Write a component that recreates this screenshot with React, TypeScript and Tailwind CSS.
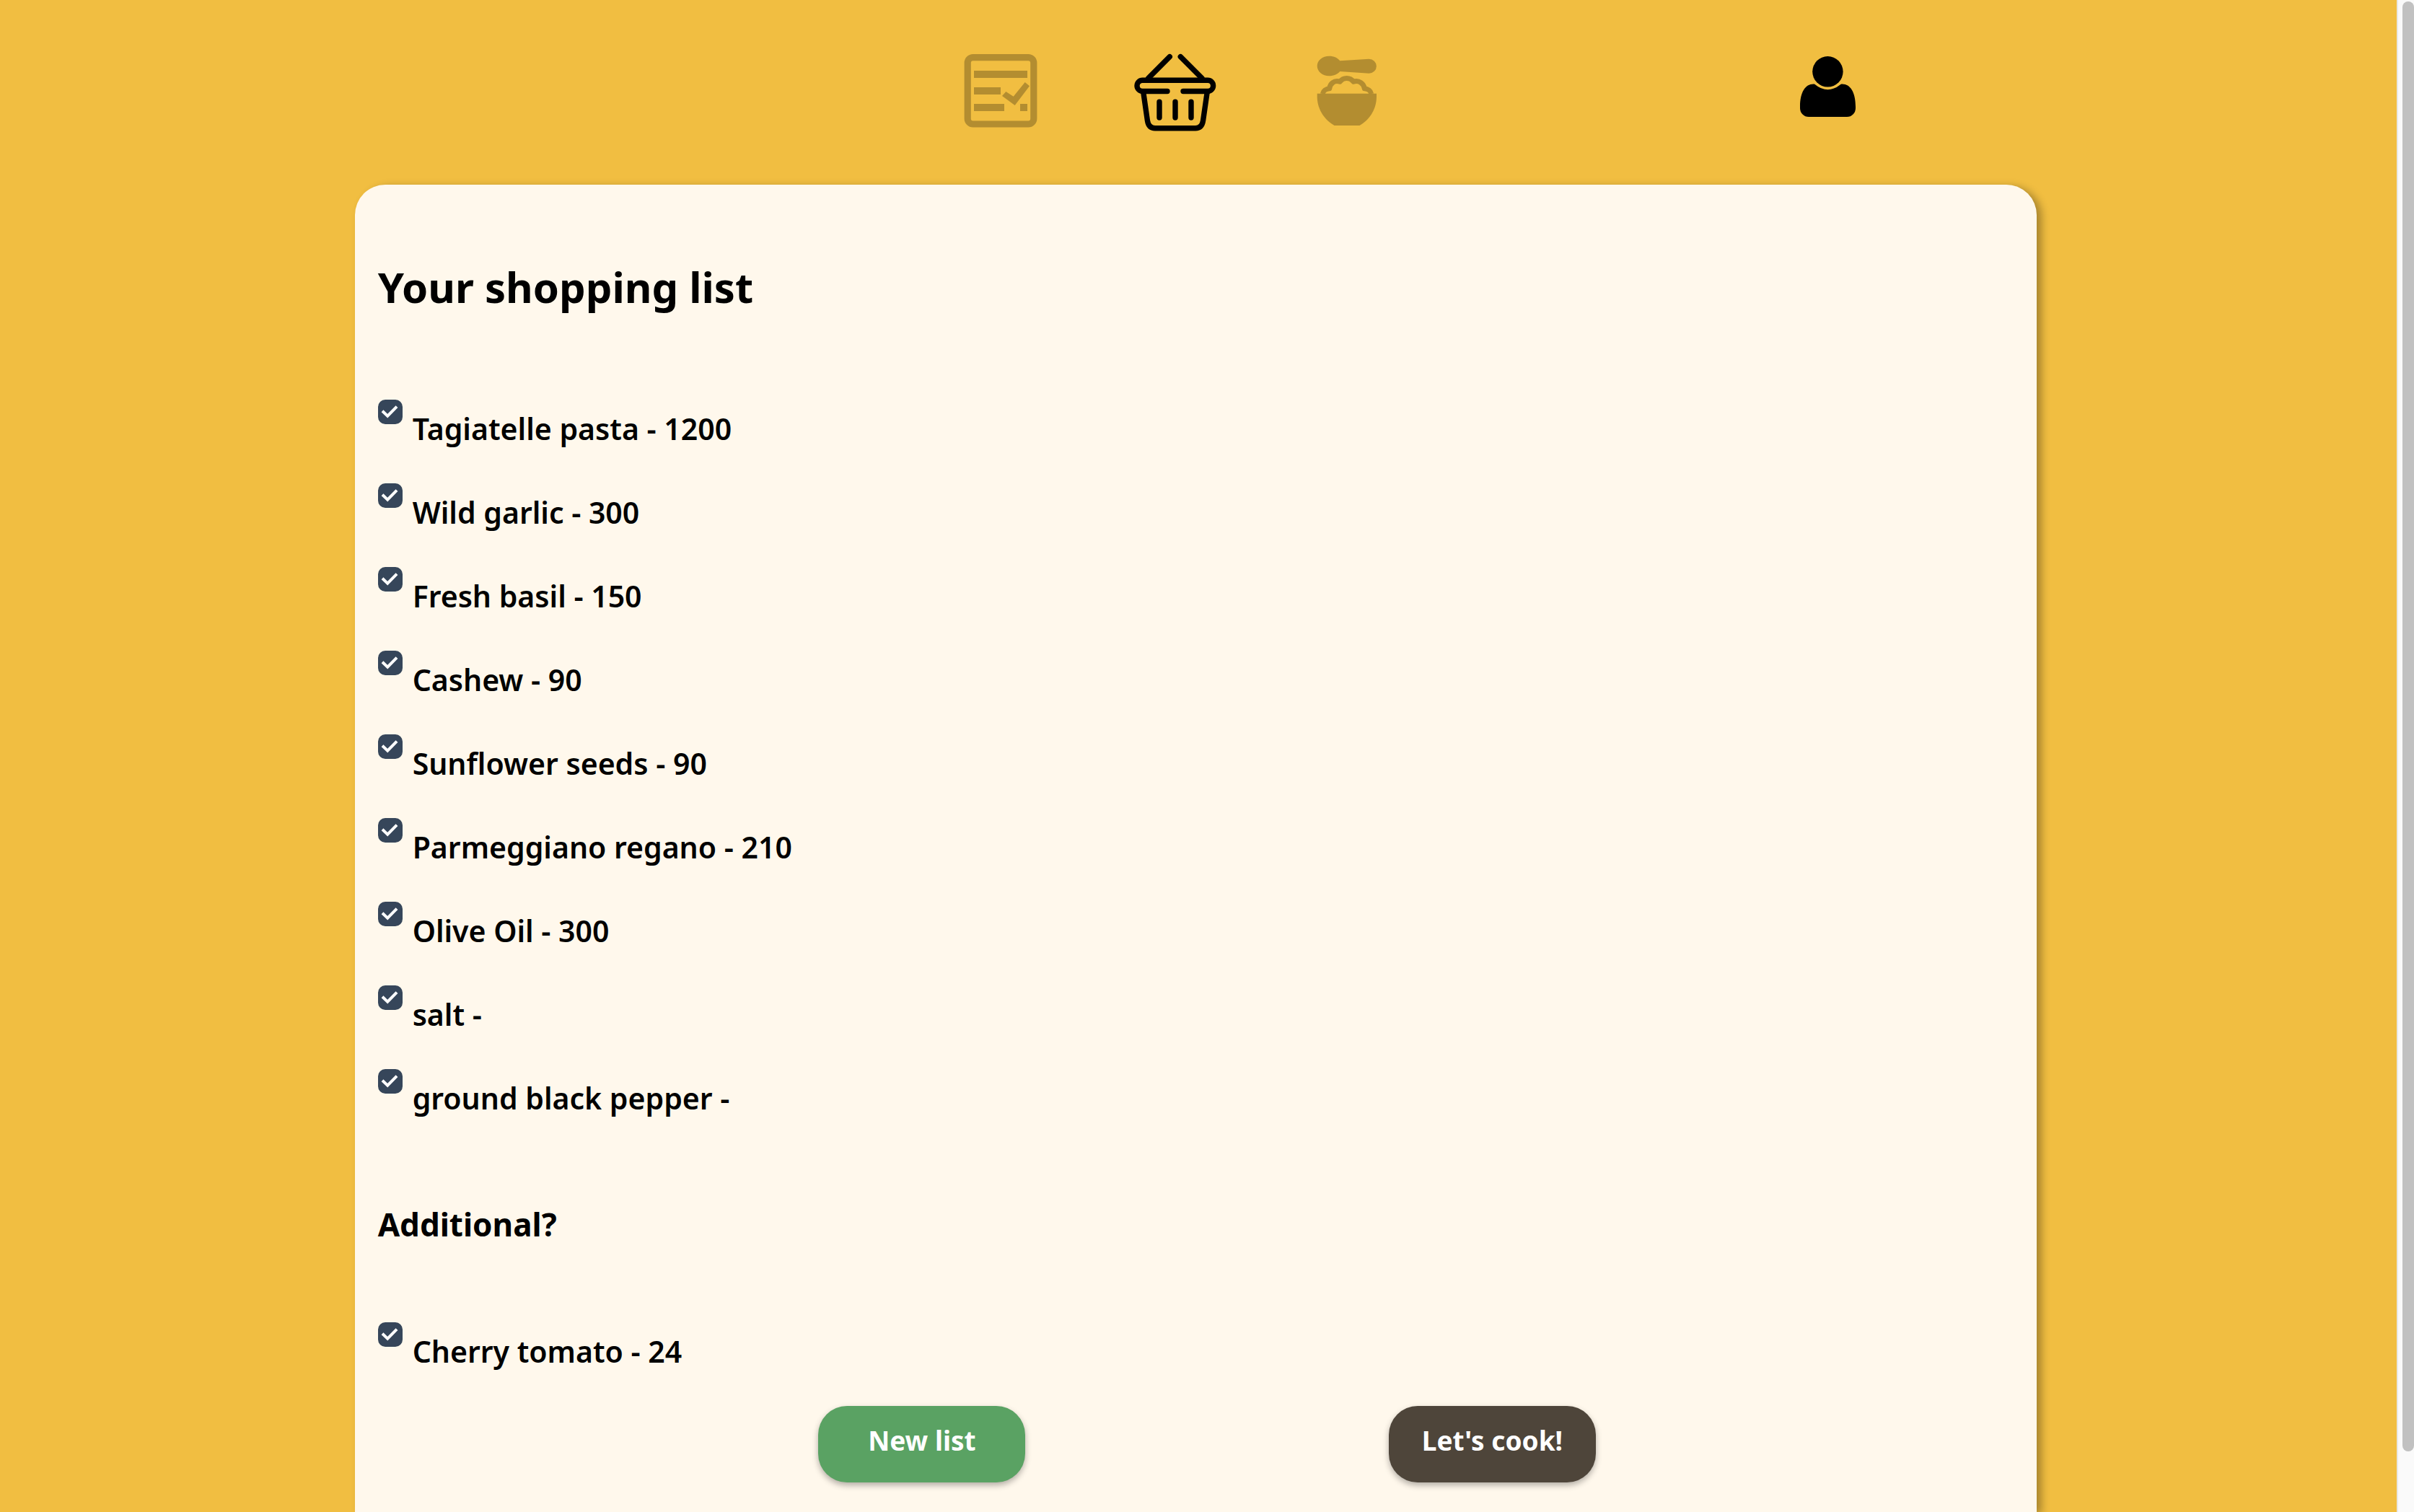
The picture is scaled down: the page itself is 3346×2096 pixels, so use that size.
import React from "react";

const shoppingList = [
  "Tagiatelle pasta - 1200",
  "Wild garlic - 300",
  "Fresh basil - 150",
  "Cashew - 90",
  "Sunflower seeds - 90",
  "Parmeggiano regano - 210",
  "Olive Oil - 300",
  "salt -",
  "ground black pepper -",
];

const additionalList = ["Cherry tomato - 24"];

function ChecklistIcon() {
  return (
    <svg viewBox="0 0 120 120" className="size-[120px]" fill="currentColor" aria-hidden="true">
      <rect x="14.2" y="9.6" width="91.6" height="92.4" rx="7.5" fill="none" stroke="currentColor" strokeWidth="9.2" />
      <rect x="23" y="28" width="74" height="10" />
      <rect x="23" y="51" width="37" height="10" />
      <rect x="23" y="74" width="42" height="10" />
      <rect x="87" y="74" width="10" height="10" />
      <path d="M62 63 67.3 57 77.7 63.7 93.7 44 100 49.3 79.7 76Z" />
    </svg>
  );
}

function BasketIcon() {
  return (
    <svg
      viewBox="0 0 120 120"
      className="size-[120px]"
      fill="none"
      stroke="currentColor"
      strokeWidth="7.4"
      strokeLinecap="round"
      strokeLinejoin="round"
      aria-hidden="true"
    >
      <path d="M54.3 8.7 24.7 38.3M69.3 8.7 99 38.3" />
      <path d="M51 56.5H16.7A7.7 7.7 0 0 1 9 48.8 7.6 7.6 0 0 1 16.7 41.3H107A7.6 7.6 0 0 1 114.6 48.8 7.7 7.7 0 0 1 107 56.5H73" />
      <path d="M17.8 58 23.4 97Q25 107.7 34 107.7H90Q99 107.7 100.6 97L106.2 58" />
      <path d="M40 71.2V93M62 71.2V93M84 71.2V93" />
    </svg>
  );
}

function BowlIcon() {
  return (
    <svg viewBox="0 0 120 120" className="size-[120px]" fill="currentColor" aria-hidden="true">
      <path d="M35.3 7.8C42 7.8 47.4 10.5 50.3 14.3L90.5 11.7A10.4 10 0 0 1 90.5 31.7L50.3 29C47.4 32.7 42 35.3 35.3 35.3 26.1 35.3 18.7 29.1 18.7 21.5S26.1 7.8 35.3 7.8Z" />
      <path
        d="M26.3 60C27 56 31 53 35.7 52.7 36.5 46.5 42 40.5 50.3 43.3A11.5 11.5 0 0 1 69 43.3C77 40.5 83.5 46.5 84.3 52.7 89 53 93 56 93.7 60"
        fill="none"
        stroke="currentColor"
        strokeWidth="7"
        strokeLinejoin="round"
      />
      <path d="M18.7 59.7H101V65C100.5 83 90 97 77.5 104H42.5C30 97 19.2 83 18.7 65Z" />
    </svg>
  );
}

function UserIcon() {
  return (
    <svg viewBox="0 0 120 120" className="size-[120px]" fill="currentColor" aria-hidden="true">
      <circle cx="60.4" cy="29.3" r="21.2" />
      <path d="M42.3 46.7Q60.5 61.8 78.7 46.7C91 45.5 99 57 99 78V80A12 12 0 0 1 87 92H34A12 12 0 0 1 22 80V78C22 57 30 45.5 42.3 46.7Z" />
    </svg>
  );
}

function CheckList({ items, label }: { items: string[]; label: string }) {
  return (
    <ul aria-label={label}>
      {items.map((item) => (
        <li key={item} className="h-[116px]">
          <label className="inline-flex items-start gap-3.5">
            <span className="grid size-[34px] shrink-0">
              <input
                type="checkbox"
                defaultChecked
                className="peer col-start-1 row-start-1 size-full appearance-none rounded-[10px] border-2 border-[#36465a] checked:bg-[#36465a]"
              />
              <svg
                viewBox="0 0 34 34"
                className="pointer-events-none col-start-1 row-start-1 size-full opacity-0 peer-checked:opacity-100"
                fill="none"
                stroke="white"
                strokeWidth="4"
                aria-hidden="true"
              >
                <path d="M6 15.8 13.2 22.6 26 9.6" />
              </svg>
            </span>
            <span className="pt-2.5 text-[41px] leading-[60px] font-semibold">{item}</span>
          </label>
        </li>
      ))}
    </ul>
  );
}

export default function App() {
  return (
    <div className="flex h-screen overflow-hidden bg-[#f1be41] font-['Noto_Sans',sans-serif] text-black">
      <div className="flex min-w-0 flex-1 flex-col">
        <header className="flex h-[256px] shrink-0 items-start justify-between pt-[70px] pr-[21.95%] pl-[39.96%]">
          <nav className="flex gap-[120px]" aria-label="Main">
            <a href="#recipes" aria-label="Recipes" className="opacity-25">
              <ChecklistIcon />
            </a>
            <a href="#shopping" aria-label="Shopping list">
              <BasketIcon />
            </a>
            <a href="#cook" aria-label="Cook" className="opacity-25">
              <BowlIcon />
            </a>
          </nav>
          <button type="button" aria-label="Profile">
            <UserIcon />
          </button>
        </header>

        <main className="ml-[14.8%] w-[70.17%] flex-1 rounded-t-[42px] bg-[#fff8ec] pt-[102px] pl-8 shadow-[7px_3px_12px_rgba(0,0,0,0.3)]">
          <h1 className="text-[58px] leading-[80px] font-bold">Your shopping list</h1>
          <div className="mt-[116px]">
            <CheckList items={shoppingList} label="Shopping list" />
          </div>
          <h2 className="mt-[69px] mb-[106px] text-[44px] leading-[60px] font-bold">Additional?</h2>
          <CheckList items={additionalList} label="Additional items" />
          <div className="flex justify-center gap-[21.9%]">
            <button
              type="button"
              className="w-[287px] rounded-[40px] bg-[#5aa263] pt-6 pb-[34px] text-[37px] leading-[48px] font-bold text-white shadow-[0_4px_8px_rgba(0,0,0,0.3)]"
            >
              New list
            </button>
            <button
              type="button"
              className="w-[287px] rounded-[40px] bg-[#4e453a] pt-6 pb-[34px] text-[37px] leading-[48px] font-bold text-white shadow-[0_4px_8px_rgba(0,0,0,0.3)]"
            >
              Let's cook!
            </button>
          </div>
        </main>
      </div>

      <div className="flex w-6 shrink-0 justify-end border-l-2 border-[#e8e8e8] bg-[#fafafa] pt-0.5" aria-hidden="true">
        <div className="h-[96%] w-4 rounded-full bg-[#c1c1c1]" />
      </div>
    </div>
  );
}
